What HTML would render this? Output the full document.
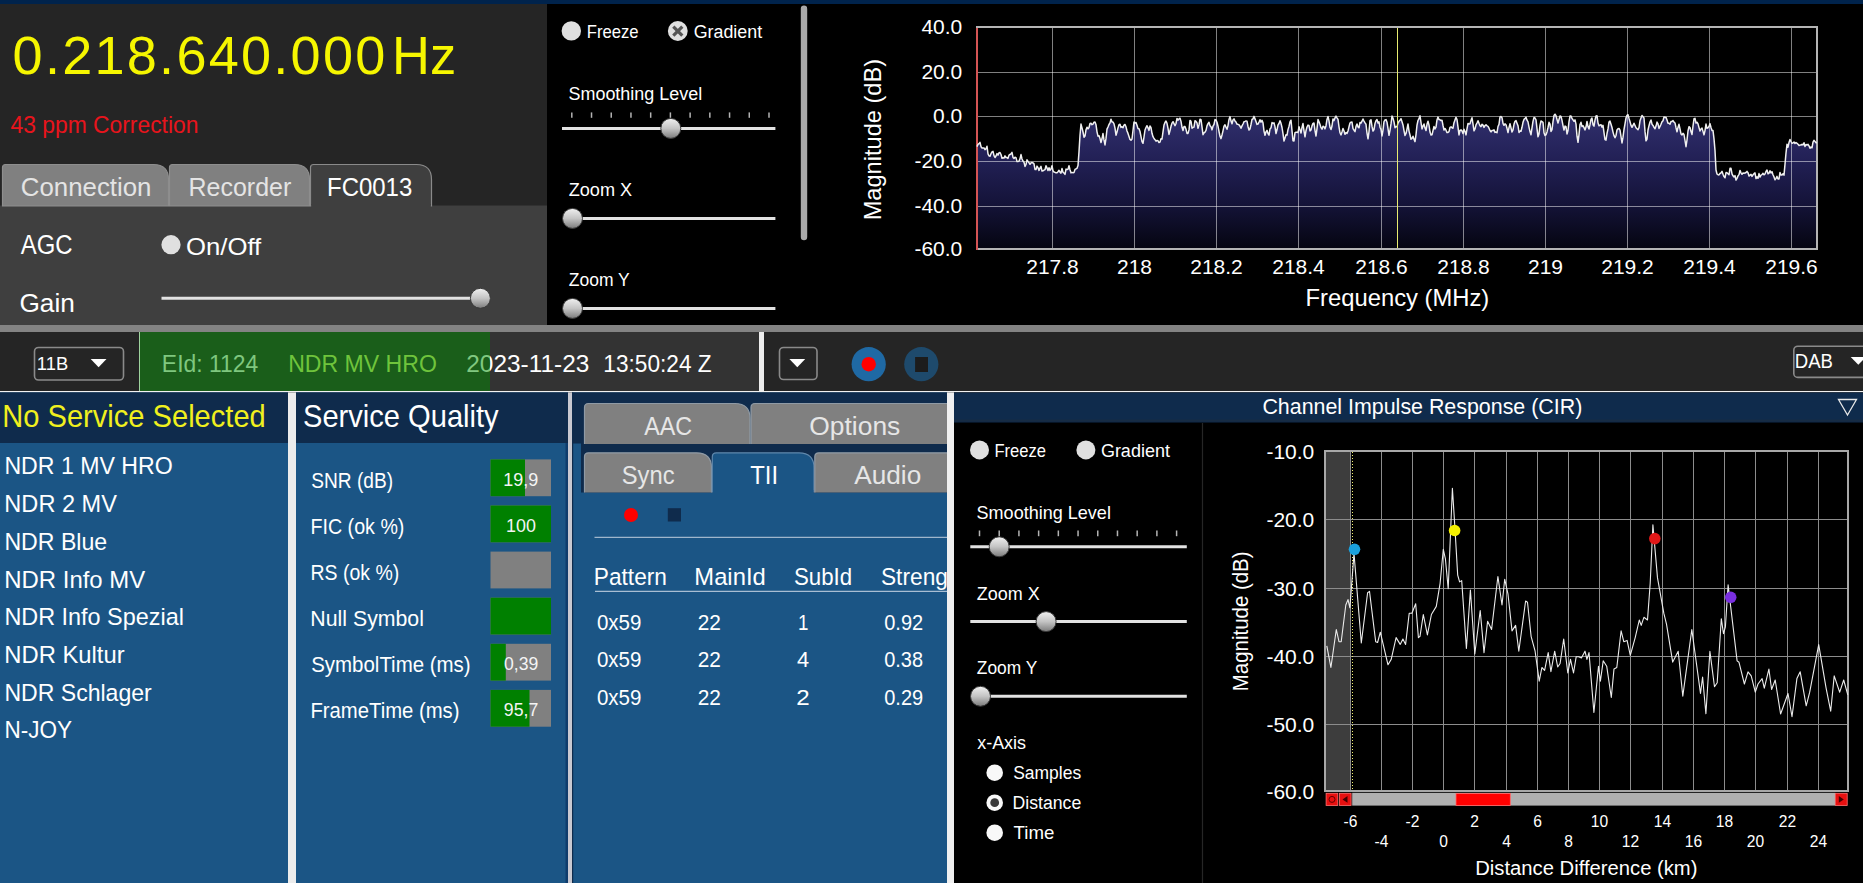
<!DOCTYPE html><html><head><meta charset="utf-8"><style>html,body{margin:0;padding:0;background:#000;overflow:hidden}svg{display:block}text{font-family:"Liberation Sans",sans-serif}</style></head><body><svg width="1863" height="883" viewBox="0 0 1863 883"><rect x="0" y="0" width="1863" height="883" fill="#000" /><rect x="0" y="0" width="1863" height="4" fill="#00234c" /><rect x="0" y="4" width="547" height="321" fill="#252525" /><rect x="0" y="205.5" width="547" height="119.5" fill="#3f3f3f" /><rect x="547" y="4" width="1316" height="321" fill="#000" /><rect x="0" y="325" width="1863" height="7" fill="#838383" /><rect x="0" y="332" width="1863" height="59" fill="#252525" /><rect x="139" y="332" width="351" height="59" fill="#1a5e1a" /><line x1="139.5" y1="332" x2="139.5" y2="391" stroke="#9fd39f" stroke-width="1" /><rect x="490" y="332" width="269" height="59" fill="#333333" /><rect x="759" y="332" width="5" height="59" fill="#ededed" /><rect x="0" y="391" width="1863" height="1.5" fill="#f2f2f2" /><rect x="0" y="392.5" width="288" height="491" fill="#1b5585" /><rect x="0" y="392.5" width="288" height="50.5" fill="#0f2b4c" /><rect x="288" y="392.5" width="8" height="491" fill="#ececec" /><rect x="296" y="392.5" width="272" height="491" fill="#1b5585" /><rect x="296" y="392.5" width="272" height="50.5" fill="#0f2b4c" /><rect x="565.5" y="443" width="2.5" height="441" fill="#0f3c6c" /><rect x="568" y="392.5" width="4" height="491" fill="#c9c9d1" /><rect x="572" y="392.5" width="375" height="491" fill="#1b5585" /><rect x="572" y="392.5" width="375" height="51" fill="#0f2b4c" /><rect x="581" y="443" width="366" height="49.5" fill="#0f2b4c" /><rect x="572" y="392.5" width="1.2" height="491" fill="#0f2b4c" /><rect x="947" y="392.5" width="7" height="491" fill="#f0f0f0" /><rect x="954" y="392.5" width="909" height="491" fill="#000" /><rect x="954" y="392.5" width="909" height="30" fill="#0f2b4c" /><defs>
<linearGradient id="thumb" x1="0" y1="0" x2="0" y2="1">
<stop offset="0" stop-color="#f0f0f0"/><stop offset="0.5" stop-color="#c4c4c4"/><stop offset="1" stop-color="#7c7c7c"/></linearGradient>
<linearGradient id="specfill" x1="0" y1="0" x2="0" y2="1">
<stop offset="0" stop-color="#403f78"/><stop offset="1" stop-color="#0b0b18"/></linearGradient>
</defs><text x="12.59" y="73.9" font-size="54.07" fill="#f6f600" textLength="372.72" lengthAdjust="spacing" >0.218.640.000</text><text x="392.00" y="73.9" font-size="54.07" fill="#f6f600" textLength="64.12" lengthAdjust="spacingAndGlyphs" >Hz</text><text x="10.48" y="133.4" font-size="23.26" fill="#e8141c" textLength="188.01" lengthAdjust="spacingAndGlyphs" >43 ppm Correction</text><path d="M2.5,206 L2.5,167.5 Q2.5,164.5 5.5,164.5 L153.5,164.5 Q168.5,164.5 168.5,179.5 L168.5,206 Z" fill="#808080" stroke="#8e8e8e" stroke-width="1.2"/><path d="M169.5,206 L169.5,167.5 Q169.5,164.5 172.5,164.5 L294.5,164.5 Q309.5,164.5 309.5,179.5 L309.5,206 Z" fill="#808080" stroke="#8e8e8e" stroke-width="1.2"/><path d="M310.5,206 L310.5,167.5 Q310.5,164.5 313.5,164.5 L416.5,164.5 Q431.5,164.5 431.5,179.5 L431.5,206 Z" fill="#3f3f3f" stroke="#8a8a8a" stroke-width="1.2"/><rect x="311.2" y="204" width="119.6" height="4" fill="#3f3f3f" /><text x="20.79" y="195.6" font-size="26.02" fill="#e4e4e4" textLength="130.69" lengthAdjust="spacingAndGlyphs" >Connection</text><text x="188.55" y="195.6" font-size="26.02" fill="#e4e4e4" textLength="102.66" lengthAdjust="spacingAndGlyphs" >Recorder</text><text x="327.04" y="195.6" font-size="26.02" fill="#ffffff" textLength="85.22" lengthAdjust="spacingAndGlyphs" >FC0013</text><text x="20.75" y="254.0" font-size="27.62" fill="#fff" textLength="51.76" lengthAdjust="spacingAndGlyphs" >AGC</text><circle cx="171" cy="244.7" r="9.6" fill="#e0e0e0" /><text x="185.99" y="255.3" font-size="23.69" fill="#fff" textLength="75.27" lengthAdjust="spacingAndGlyphs" >On/Off</text><text x="19.48" y="312.1" font-size="26.60" fill="#fff" textLength="55.42" lengthAdjust="spacingAndGlyphs" >Gain</text><line x1="161.5" y1="298.3" x2="480" y2="298.3" stroke="#e2e2e2" stroke-width="3" stroke-linecap="butt"/><circle cx="480.4" cy="298.3" r="10" fill="url(#thumb)" stroke="#3a3a3a" stroke-width="1"/><circle cx="571.3" cy="30.9" r="9.7" fill="#e0e0e0" /><text x="586.83" y="37.7" font-size="18.46" fill="#fff" textLength="51.81" lengthAdjust="spacingAndGlyphs" >Freeze</text><circle cx="677.8" cy="31" r="9.9" fill="#e0e0e0" /><line x1="673.3" y1="26.6" x2="682.3" y2="35.6" stroke="#555" stroke-width="3.2" /><line x1="682.3" y1="26.6" x2="673.3" y2="35.6" stroke="#555" stroke-width="3.2" /><text x="693.70" y="37.7" font-size="18.46" fill="#fff" textLength="68.43" lengthAdjust="spacingAndGlyphs" >Gradient</text><text x="568.48" y="99.9" font-size="18.75" fill="#fff" textLength="133.72" lengthAdjust="spacingAndGlyphs" >Smoothing Level</text><line x1="562" y1="128.4" x2="775.4" y2="128.4" stroke="#e2e2e2" stroke-width="3" stroke-linecap="butt"/><line x1="571.8" y1="112.4" x2="571.8" y2="117.8" stroke="#b4b4b4" stroke-width="1.5" /><line x1="591.52" y1="112.4" x2="591.52" y2="117.8" stroke="#b4b4b4" stroke-width="1.5" /><line x1="611.24" y1="112.4" x2="611.24" y2="117.8" stroke="#b4b4b4" stroke-width="1.5" /><line x1="630.9599999999999" y1="112.4" x2="630.9599999999999" y2="117.8" stroke="#b4b4b4" stroke-width="1.5" /><line x1="650.68" y1="112.4" x2="650.68" y2="117.8" stroke="#b4b4b4" stroke-width="1.5" /><line x1="670.4" y1="112.4" x2="670.4" y2="117.8" stroke="#b4b4b4" stroke-width="1.5" /><line x1="690.12" y1="112.4" x2="690.12" y2="117.8" stroke="#b4b4b4" stroke-width="1.5" /><line x1="709.8399999999999" y1="112.4" x2="709.8399999999999" y2="117.8" stroke="#b4b4b4" stroke-width="1.5" /><line x1="729.56" y1="112.4" x2="729.56" y2="117.8" stroke="#b4b4b4" stroke-width="1.5" /><line x1="749.28" y1="112.4" x2="749.28" y2="117.8" stroke="#b4b4b4" stroke-width="1.5" /><line x1="769.0" y1="112.4" x2="769.0" y2="117.8" stroke="#b4b4b4" stroke-width="1.5" /><circle cx="670.8" cy="128.4" r="10" fill="url(#thumb)" stroke="#3a3a3a" stroke-width="1"/><text x="568.72" y="195.6" font-size="17.44" fill="#fff" textLength="63.46" lengthAdjust="spacingAndGlyphs" >Zoom X</text><line x1="572.5" y1="218.4" x2="775.4" y2="218.4" stroke="#e2e2e2" stroke-width="3" stroke-linecap="butt"/><circle cx="572.5" cy="218.4" r="10" fill="url(#thumb)" stroke="#3a3a3a" stroke-width="1"/><text x="568.75" y="285.6" font-size="17.44" fill="#fff" textLength="60.93" lengthAdjust="spacingAndGlyphs" >Zoom Y</text><line x1="572.5" y1="308.4" x2="775.4" y2="308.4" stroke="#e2e2e2" stroke-width="3" stroke-linecap="butt"/><circle cx="572.5" cy="308.4" r="10" fill="url(#thumb)" stroke="#3a3a3a" stroke-width="1"/><rect x="800.8" y="5.6" width="6.4" height="234.6" rx="3.2" fill="#a9a9a9"/><linearGradient id="sg" gradientUnits="userSpaceOnUse" x1="0" y1="27" x2="0" y2="249.3"><stop offset="0" stop-color="#4c4aa8"/><stop offset="0.4" stop-color="#302f6c"/><stop offset="0.6" stop-color="#222055"/><stop offset="0.8" stop-color="#141338"/><stop offset="1" stop-color="#050510"/></linearGradient><polygon points="977,249.3 977.0,146.6 978.0,144.4 979.0,143.7 980.0,142.4 981.0,146.7 982.0,148.0 983.0,148.1 984.0,147.9 985.0,149.7 986.0,148.8 987.0,146.3 988.0,153.9 989.0,155.8 990.0,156.3 991.0,153.7 992.0,151.8 993.0,151.3 994.0,155.6 995.0,157.5 996.0,156.0 997.0,153.6 998.0,155.1 999.0,152.7 1000.0,152.6 1001.0,154.5 1002.0,158.2 1003.0,157.8 1004.0,158.1 1005.0,155.9 1006.0,157.5 1007.0,157.6 1008.0,158.4 1009.0,155.1 1010.0,154.5 1011.0,153.9 1012.0,152.3 1013.0,157.4 1014.0,158.5 1015.0,157.2 1016.0,157.6 1017.0,161.6 1018.0,161.5 1019.0,161.1 1020.0,158.9 1021.0,154.6 1022.0,159.0 1023.0,161.1 1024.0,162.1 1025.0,166.4 1026.0,164.5 1027.0,159.8 1028.0,161.4 1029.0,162.7 1030.0,164.3 1031.0,162.8 1032.0,162.5 1033.0,162.9 1034.0,163.9 1035.0,169.4 1036.0,169.6 1037.0,166.1 1038.0,167.7 1039.0,170.4 1040.0,168.1 1041.0,166.3 1042.0,171.1 1043.0,170.8 1044.0,170.2 1045.0,169.7 1046.0,165.8 1047.0,167.9 1048.0,170.5 1049.0,167.8 1050.0,170.4 1051.0,169.0 1052.0,165.7 1053.0,170.8 1054.0,172.0 1055.0,172.3 1056.0,172.8 1057.0,172.7 1058.0,171.7 1059.0,170.3 1060.0,172.2 1061.0,173.1 1062.0,168.5 1063.0,172.3 1064.0,173.0 1065.0,174.4 1066.0,169.1 1067.0,169.5 1068.0,169.2 1069.0,165.8 1070.0,169.7 1071.0,172.9 1072.0,172.4 1073.0,172.7 1074.0,172.5 1075.0,169.4 1076.0,168.8 1077.0,168.3 1078.0,165.6 1079.0,151.9 1080.0,135.3 1081.0,124.1 1082.0,127.9 1083.0,132.0 1084.0,137.2 1085.0,136.1 1086.0,129.8 1087.0,127.2 1088.0,128.9 1089.0,127.5 1090.0,123.5 1091.0,123.3 1092.0,124.7 1093.0,124.2 1094.0,122.2 1095.0,122.0 1096.0,124.7 1097.0,131.8 1098.0,136.2 1099.0,135.7 1100.0,138.6 1101.0,142.5 1102.0,138.8 1103.0,133.5 1104.0,139.9 1105.0,144.9 1106.0,138.4 1107.0,129.1 1108.0,127.0 1109.0,124.5 1110.0,122.9 1111.0,119.3 1112.0,122.0 1113.0,122.0 1114.0,123.9 1115.0,128.2 1116.0,135.2 1117.0,132.0 1118.0,127.9 1119.0,124.7 1120.0,124.3 1121.0,127.4 1122.0,126.7 1123.0,127.7 1124.0,125.1 1125.0,124.5 1126.0,126.8 1127.0,131.0 1128.0,133.4 1129.0,136.4 1130.0,139.4 1131.0,140.2 1132.0,139.1 1133.0,130.5 1134.0,122.1 1135.0,123.1 1136.0,122.5 1137.0,125.2 1138.0,128.6 1139.0,128.7 1140.0,131.5 1141.0,136.6 1142.0,141.7 1143.0,143.3 1144.0,137.0 1145.0,130.0 1146.0,127.5 1147.0,125.7 1148.0,127.9 1149.0,130.4 1150.0,125.9 1151.0,127.6 1152.0,133.3 1153.0,136.7 1154.0,138.5 1155.0,139.7 1156.0,141.2 1157.0,140.4 1158.0,140.8 1159.0,142.5 1160.0,142.1 1161.0,138.8 1162.0,139.0 1163.0,131.9 1164.0,125.1 1165.0,122.5 1166.0,121.0 1167.0,123.3 1168.0,128.4 1169.0,134.4 1170.0,130.6 1171.0,126.3 1172.0,123.1 1173.0,121.7 1174.0,123.7 1175.0,125.7 1176.0,123.5 1177.0,118.4 1178.0,120.2 1179.0,118.9 1180.0,118.2 1181.0,121.4 1182.0,127.3 1183.0,130.5 1184.0,126.6 1185.0,126.6 1186.0,129.3 1187.0,133.4 1188.0,133.4 1189.0,129.9 1190.0,120.4 1191.0,121.3 1192.0,128.2 1193.0,127.4 1194.0,127.1 1195.0,120.7 1196.0,121.3 1197.0,122.8 1198.0,128.3 1199.0,124.9 1200.0,119.2 1201.0,119.7 1202.0,126.9 1203.0,134.7 1204.0,132.9 1205.0,132.2 1206.0,130.4 1207.0,125.9 1208.0,123.6 1209.0,122.3 1210.0,125.8 1211.0,126.7 1212.0,129.9 1213.0,126.2 1214.0,124.5 1215.0,119.6 1216.0,120.0 1217.0,122.2 1218.0,126.2 1219.0,131.5 1220.0,136.3 1221.0,138.6 1222.0,135.0 1223.0,130.8 1224.0,126.2 1225.0,124.8 1226.0,127.1 1227.0,129.2 1228.0,125.6 1229.0,119.4 1230.0,116.6 1231.0,121.1 1232.0,123.8 1233.0,120.0 1234.0,118.9 1235.0,121.0 1236.0,122.1 1237.0,124.2 1238.0,124.3 1239.0,124.8 1240.0,126.2 1241.0,128.3 1242.0,125.9 1243.0,124.0 1244.0,121.8 1245.0,121.4 1246.0,120.9 1247.0,121.2 1248.0,126.5 1249.0,130.0 1250.0,128.9 1251.0,124.5 1252.0,119.5 1253.0,118.9 1254.0,116.4 1255.0,118.9 1256.0,121.5 1257.0,124.4 1258.0,124.1 1259.0,122.1 1260.0,119.8 1261.0,122.1 1262.0,120.4 1263.0,122.8 1264.0,131.1 1265.0,135.3 1266.0,131.8 1267.0,130.3 1268.0,133.5 1269.0,135.1 1270.0,129.0 1271.0,127.8 1272.0,122.6 1273.0,123.3 1274.0,122.9 1275.0,126.9 1276.0,133.6 1277.0,129.8 1278.0,125.0 1279.0,123.5 1280.0,120.8 1281.0,123.3 1282.0,127.5 1283.0,133.6 1284.0,141.1 1285.0,138.0 1286.0,134.7 1287.0,135.2 1288.0,129.6 1289.0,126.4 1290.0,121.9 1291.0,120.2 1292.0,130.8 1293.0,140.7 1294.0,140.9 1295.0,132.6 1296.0,132.2 1297.0,132.2 1298.0,132.7 1299.0,126.7 1300.0,129.9 1301.0,133.0 1302.0,127.5 1303.0,123.5 1304.0,130.8 1305.0,136.8 1306.0,130.7 1307.0,127.0 1308.0,125.1 1309.0,125.4 1310.0,130.9 1311.0,130.0 1312.0,125.9 1313.0,123.4 1314.0,123.0 1315.0,130.6 1316.0,136.0 1317.0,128.7 1318.0,119.6 1319.0,121.7 1320.0,124.4 1321.0,127.7 1322.0,129.2 1323.0,126.3 1324.0,126.7 1325.0,128.9 1326.0,125.7 1327.0,119.4 1328.0,116.4 1329.0,120.9 1330.0,127.3 1331.0,129.5 1332.0,126.0 1333.0,118.9 1334.0,120.6 1335.0,117.9 1336.0,116.1 1337.0,117.8 1338.0,119.4 1339.0,126.8 1340.0,132.8 1341.0,134.9 1342.0,131.9 1343.0,128.5 1344.0,131.0 1345.0,134.3 1346.0,132.5 1347.0,133.4 1348.0,131.0 1349.0,126.8 1350.0,123.0 1351.0,122.2 1352.0,122.1 1353.0,128.7 1354.0,130.2 1355.0,131.6 1356.0,126.6 1357.0,123.9 1358.0,127.0 1359.0,127.8 1360.0,122.4 1361.0,123.1 1362.0,121.2 1363.0,119.0 1364.0,121.1 1365.0,122.9 1366.0,124.3 1367.0,133.1 1368.0,138.8 1369.0,131.6 1370.0,120.6 1371.0,119.7 1372.0,126.4 1373.0,131.1 1374.0,129.5 1375.0,123.6 1376.0,120.8 1377.0,119.6 1378.0,123.1 1379.0,121.8 1380.0,127.2 1381.0,129.4 1382.0,135.9 1383.0,130.1 1384.0,121.6 1385.0,120.0 1386.0,119.6 1387.0,122.2 1388.0,128.6 1389.0,135.3 1390.0,130.3 1391.0,123.9 1392.0,116.0 1393.0,118.2 1394.0,121.9 1395.0,127.7 1396.0,126.6 1397.0,126.9 1398.0,123.0 1399.0,121.3 1400.0,120.2 1401.0,118.7 1402.0,121.8 1403.0,124.9 1404.0,130.6 1405.0,135.5 1406.0,133.5 1407.0,129.1 1408.0,124.0 1409.0,131.1 1410.0,135.0 1411.0,139.3 1412.0,138.4 1413.0,136.2 1414.0,139.2 1415.0,141.6 1416.0,134.6 1417.0,125.2 1418.0,120.5 1419.0,118.7 1420.0,115.8 1421.0,122.5 1422.0,129.0 1423.0,126.1 1424.0,124.0 1425.0,128.0 1426.0,130.6 1427.0,124.3 1428.0,121.3 1429.0,125.1 1430.0,132.1 1431.0,135.0 1432.0,134.8 1433.0,130.6 1434.0,126.4 1435.0,129.0 1436.0,127.2 1437.0,119.9 1438.0,117.1 1439.0,119.6 1440.0,119.7 1441.0,120.6 1442.0,120.2 1443.0,125.5 1444.0,130.0 1445.0,128.5 1446.0,130.2 1447.0,132.6 1448.0,132.4 1449.0,131.7 1450.0,127.3 1451.0,126.8 1452.0,127.8 1453.0,128.2 1454.0,122.7 1455.0,119.9 1456.0,117.4 1457.0,119.5 1458.0,127.1 1459.0,134.9 1460.0,130.5 1461.0,129.9 1462.0,130.9 1463.0,133.6 1464.0,129.2 1465.0,131.5 1466.0,134.9 1467.0,128.8 1468.0,123.5 1469.0,124.1 1470.0,123.7 1471.0,120.6 1472.0,117.7 1473.0,124.0 1474.0,130.8 1475.0,129.0 1476.0,124.9 1477.0,123.0 1478.0,120.7 1479.0,123.3 1480.0,125.7 1481.0,126.6 1482.0,124.2 1483.0,125.1 1484.0,127.4 1485.0,125.6 1486.0,124.7 1487.0,125.8 1488.0,126.3 1489.0,128.2 1490.0,130.5 1491.0,131.9 1492.0,130.4 1493.0,130.5 1494.0,129.9 1495.0,132.4 1496.0,132.0 1497.0,132.7 1498.0,126.5 1499.0,124.4 1500.0,116.9 1501.0,116.5 1502.0,117.7 1503.0,123.3 1504.0,125.3 1505.0,123.9 1506.0,124.8 1507.0,128.3 1508.0,132.5 1509.0,127.7 1510.0,123.8 1511.0,127.9 1512.0,132.0 1513.0,129.9 1514.0,124.3 1515.0,121.3 1516.0,120.6 1517.0,123.2 1518.0,125.7 1519.0,132.5 1520.0,131.1 1521.0,131.3 1522.0,127.3 1523.0,122.3 1524.0,119.4 1525.0,118.6 1526.0,117.2 1527.0,120.2 1528.0,121.9 1529.0,127.1 1530.0,131.6 1531.0,134.7 1532.0,127.8 1533.0,121.4 1534.0,117.4 1535.0,118.0 1536.0,119.8 1537.0,128.6 1538.0,136.8 1539.0,133.9 1540.0,125.3 1541.0,121.0 1542.0,121.6 1543.0,122.3 1544.0,132.7 1545.0,135.4 1546.0,134.8 1547.0,131.9 1548.0,127.5 1549.0,122.3 1550.0,124.2 1551.0,131.5 1552.0,129.6 1553.0,121.7 1554.0,115.4 1555.0,114.2 1556.0,115.7 1557.0,119.5 1558.0,123.0 1559.0,119.5 1560.0,116.0 1561.0,116.5 1562.0,120.4 1563.0,125.6 1564.0,130.0 1565.0,126.1 1566.0,126.7 1567.0,134.0 1568.0,130.5 1569.0,121.6 1570.0,116.1 1571.0,115.9 1572.0,118.6 1573.0,119.8 1574.0,121.3 1575.0,119.9 1576.0,124.1 1577.0,136.2 1578.0,142.3 1579.0,134.6 1580.0,124.5 1581.0,122.3 1582.0,126.6 1583.0,125.7 1584.0,127.6 1585.0,129.9 1586.0,127.1 1587.0,121.4 1588.0,126.6 1589.0,129.0 1590.0,124.7 1591.0,119.5 1592.0,118.0 1593.0,124.7 1594.0,126.1 1595.0,120.1 1596.0,115.9 1597.0,115.8 1598.0,123.0 1599.0,125.8 1600.0,125.2 1601.0,124.7 1602.0,127.1 1603.0,125.3 1604.0,132.7 1605.0,139.6 1606.0,140.1 1607.0,133.5 1608.0,128.9 1609.0,122.1 1610.0,121.1 1611.0,124.3 1612.0,127.5 1613.0,132.1 1614.0,135.6 1615.0,137.8 1616.0,135.5 1617.0,130.0 1618.0,128.7 1619.0,128.5 1620.0,130.1 1621.0,136.5 1622.0,142.9 1623.0,137.2 1624.0,129.5 1625.0,123.8 1626.0,118.0 1627.0,115.3 1628.0,114.7 1629.0,118.4 1630.0,121.7 1631.0,125.4 1632.0,127.3 1633.0,125.3 1634.0,123.2 1635.0,125.5 1636.0,127.7 1637.0,128.8 1638.0,129.7 1639.0,127.6 1640.0,120.8 1641.0,118.1 1642.0,115.5 1643.0,116.8 1644.0,118.0 1645.0,131.4 1646.0,140.8 1647.0,139.1 1648.0,130.0 1649.0,125.7 1650.0,122.0 1651.0,120.0 1652.0,124.2 1653.0,125.4 1654.0,127.3 1655.0,128.7 1656.0,126.1 1657.0,122.1 1658.0,123.8 1659.0,128.4 1660.0,126.4 1661.0,124.2 1662.0,121.8 1663.0,120.7 1664.0,116.9 1665.0,117.4 1666.0,117.3 1667.0,120.0 1668.0,123.2 1669.0,123.3 1670.0,124.2 1671.0,121.6 1672.0,121.5 1673.0,120.6 1674.0,122.2 1675.0,123.0 1676.0,127.7 1677.0,131.8 1678.0,127.4 1679.0,124.3 1680.0,129.0 1681.0,133.9 1682.0,134.9 1683.0,133.3 1684.0,134.5 1685.0,140.5 1686.0,146.7 1687.0,140.0 1688.0,131.0 1689.0,126.7 1690.0,127.5 1691.0,131.5 1692.0,134.5 1693.0,126.0 1694.0,118.8 1695.0,118.4 1696.0,123.1 1697.0,122.2 1698.0,123.9 1699.0,127.6 1700.0,131.0 1701.0,129.0 1702.0,128.1 1703.0,131.4 1704.0,134.9 1705.0,130.6 1706.0,124.1 1707.0,128.3 1708.0,127.9 1709.0,126.4 1710.0,123.6 1711.0,127.5 1712.0,130.6 1713.0,130.5 1714.0,138.9 1715.0,150.5 1716.0,170.0 1717.0,174.0 1718.0,174.7 1719.0,174.9 1720.0,173.5 1721.0,172.9 1722.0,171.3 1723.0,174.2 1724.0,176.6 1725.0,177.8 1726.0,172.6 1727.0,172.8 1728.0,173.7 1729.0,174.8 1730.0,168.3 1731.0,168.3 1732.0,173.8 1733.0,175.8 1734.0,176.9 1735.0,175.6 1736.0,180.1 1737.0,178.4 1738.0,175.9 1739.0,174.6 1740.0,170.4 1741.0,172.8 1742.0,174.3 1743.0,173.0 1744.0,173.2 1745.0,173.1 1746.0,172.5 1747.0,171.4 1748.0,172.7 1749.0,176.1 1750.0,175.2 1751.0,174.4 1752.0,176.4 1753.0,174.8 1754.0,173.7 1755.0,172.9 1756.0,178.6 1757.0,176.8 1758.0,178.3 1759.0,173.6 1760.0,177.1 1761.0,175.1 1762.0,174.6 1763.0,173.3 1764.0,174.8 1765.0,174.0 1766.0,171.4 1767.0,170.0 1768.0,173.7 1769.0,173.3 1770.0,170.8 1771.0,172.9 1772.0,171.7 1773.0,174.8 1774.0,176.9 1775.0,179.8 1776.0,178.3 1777.0,176.4 1778.0,179.0 1779.0,178.9 1780.0,172.4 1781.0,175.0 1782.0,174.9 1783.0,173.7 1784.0,175.1 1785.0,164.2 1786.0,153.0 1787.0,144.3 1788.0,147.2 1789.0,142.6 1790.0,139.5 1791.0,141.5 1792.0,143.3 1793.0,142.8 1794.0,142.0 1795.0,143.5 1796.0,142.5 1797.0,143.3 1798.0,144.3 1799.0,145.5 1800.0,145.1 1801.0,145.1 1802.0,144.3 1803.0,144.9 1804.0,142.8 1805.0,146.5 1806.0,144.5 1807.0,145.1 1808.0,144.3 1809.0,145.9 1810.0,148.3 1811.0,147.1 1812.0,147.8 1813.0,142.2 1814.0,140.3 1815.0,141.6 1816.0,142.7 1817.0,142.8 1817,249.3" fill="url(#sg)"/><line x1="977" y1="72.5" x2="1817" y2="72.5" stroke="#ffffff" stroke-width="1" stroke-opacity="0.5"/><line x1="977" y1="116.5" x2="1817" y2="116.5" stroke="#ffffff" stroke-width="1" stroke-opacity="0.5"/><line x1="977" y1="161.5" x2="1817" y2="161.5" stroke="#ffffff" stroke-width="1" stroke-opacity="0.5"/><line x1="977" y1="206.5" x2="1817" y2="206.5" stroke="#ffffff" stroke-width="1" stroke-opacity="0.5"/><line x1="1052.5" y1="27" x2="1052.5" y2="249.3" stroke="#ffffff" stroke-width="1" stroke-opacity="0.5"/><line x1="1134.5" y1="27" x2="1134.5" y2="249.3" stroke="#ffffff" stroke-width="1" stroke-opacity="0.5"/><line x1="1216.5" y1="27" x2="1216.5" y2="249.3" stroke="#ffffff" stroke-width="1" stroke-opacity="0.5"/><line x1="1298.5" y1="27" x2="1298.5" y2="249.3" stroke="#ffffff" stroke-width="1" stroke-opacity="0.5"/><line x1="1381.5" y1="27" x2="1381.5" y2="249.3" stroke="#ffffff" stroke-width="1" stroke-opacity="0.5"/><line x1="1463.5" y1="27" x2="1463.5" y2="249.3" stroke="#ffffff" stroke-width="1" stroke-opacity="0.5"/><line x1="1545.5" y1="27" x2="1545.5" y2="249.3" stroke="#ffffff" stroke-width="1" stroke-opacity="0.5"/><line x1="1627.5" y1="27" x2="1627.5" y2="249.3" stroke="#ffffff" stroke-width="1" stroke-opacity="0.5"/><line x1="1709.5" y1="27" x2="1709.5" y2="249.3" stroke="#ffffff" stroke-width="1" stroke-opacity="0.5"/><line x1="1791.5" y1="27" x2="1791.5" y2="249.3" stroke="#ffffff" stroke-width="1" stroke-opacity="0.5"/><rect x="977" y="27" width="840" height="222" fill="none" stroke="#b4b4b4" stroke-width="2"/><line x1="977" y1="28" x2="977" y2="250" stroke="#d45454" stroke-width="2" /><polyline points="977.0,146.6 978.0,144.4 979.0,143.7 980.0,142.4 981.0,146.7 982.0,148.0 983.0,148.1 984.0,147.9 985.0,149.7 986.0,148.8 987.0,146.3 988.0,153.9 989.0,155.8 990.0,156.3 991.0,153.7 992.0,151.8 993.0,151.3 994.0,155.6 995.0,157.5 996.0,156.0 997.0,153.6 998.0,155.1 999.0,152.7 1000.0,152.6 1001.0,154.5 1002.0,158.2 1003.0,157.8 1004.0,158.1 1005.0,155.9 1006.0,157.5 1007.0,157.6 1008.0,158.4 1009.0,155.1 1010.0,154.5 1011.0,153.9 1012.0,152.3 1013.0,157.4 1014.0,158.5 1015.0,157.2 1016.0,157.6 1017.0,161.6 1018.0,161.5 1019.0,161.1 1020.0,158.9 1021.0,154.6 1022.0,159.0 1023.0,161.1 1024.0,162.1 1025.0,166.4 1026.0,164.5 1027.0,159.8 1028.0,161.4 1029.0,162.7 1030.0,164.3 1031.0,162.8 1032.0,162.5 1033.0,162.9 1034.0,163.9 1035.0,169.4 1036.0,169.6 1037.0,166.1 1038.0,167.7 1039.0,170.4 1040.0,168.1 1041.0,166.3 1042.0,171.1 1043.0,170.8 1044.0,170.2 1045.0,169.7 1046.0,165.8 1047.0,167.9 1048.0,170.5 1049.0,167.8 1050.0,170.4 1051.0,169.0 1052.0,165.7 1053.0,170.8 1054.0,172.0 1055.0,172.3 1056.0,172.8 1057.0,172.7 1058.0,171.7 1059.0,170.3 1060.0,172.2 1061.0,173.1 1062.0,168.5 1063.0,172.3 1064.0,173.0 1065.0,174.4 1066.0,169.1 1067.0,169.5 1068.0,169.2 1069.0,165.8 1070.0,169.7 1071.0,172.9 1072.0,172.4 1073.0,172.7 1074.0,172.5 1075.0,169.4 1076.0,168.8 1077.0,168.3 1078.0,165.6 1079.0,151.9 1080.0,135.3 1081.0,124.1 1082.0,127.9 1083.0,132.0 1084.0,137.2 1085.0,136.1 1086.0,129.8 1087.0,127.2 1088.0,128.9 1089.0,127.5 1090.0,123.5 1091.0,123.3 1092.0,124.7 1093.0,124.2 1094.0,122.2 1095.0,122.0 1096.0,124.7 1097.0,131.8 1098.0,136.2 1099.0,135.7 1100.0,138.6 1101.0,142.5 1102.0,138.8 1103.0,133.5 1104.0,139.9 1105.0,144.9 1106.0,138.4 1107.0,129.1 1108.0,127.0 1109.0,124.5 1110.0,122.9 1111.0,119.3 1112.0,122.0 1113.0,122.0 1114.0,123.9 1115.0,128.2 1116.0,135.2 1117.0,132.0 1118.0,127.9 1119.0,124.7 1120.0,124.3 1121.0,127.4 1122.0,126.7 1123.0,127.7 1124.0,125.1 1125.0,124.5 1126.0,126.8 1127.0,131.0 1128.0,133.4 1129.0,136.4 1130.0,139.4 1131.0,140.2 1132.0,139.1 1133.0,130.5 1134.0,122.1 1135.0,123.1 1136.0,122.5 1137.0,125.2 1138.0,128.6 1139.0,128.7 1140.0,131.5 1141.0,136.6 1142.0,141.7 1143.0,143.3 1144.0,137.0 1145.0,130.0 1146.0,127.5 1147.0,125.7 1148.0,127.9 1149.0,130.4 1150.0,125.9 1151.0,127.6 1152.0,133.3 1153.0,136.7 1154.0,138.5 1155.0,139.7 1156.0,141.2 1157.0,140.4 1158.0,140.8 1159.0,142.5 1160.0,142.1 1161.0,138.8 1162.0,139.0 1163.0,131.9 1164.0,125.1 1165.0,122.5 1166.0,121.0 1167.0,123.3 1168.0,128.4 1169.0,134.4 1170.0,130.6 1171.0,126.3 1172.0,123.1 1173.0,121.7 1174.0,123.7 1175.0,125.7 1176.0,123.5 1177.0,118.4 1178.0,120.2 1179.0,118.9 1180.0,118.2 1181.0,121.4 1182.0,127.3 1183.0,130.5 1184.0,126.6 1185.0,126.6 1186.0,129.3 1187.0,133.4 1188.0,133.4 1189.0,129.9 1190.0,120.4 1191.0,121.3 1192.0,128.2 1193.0,127.4 1194.0,127.1 1195.0,120.7 1196.0,121.3 1197.0,122.8 1198.0,128.3 1199.0,124.9 1200.0,119.2 1201.0,119.7 1202.0,126.9 1203.0,134.7 1204.0,132.9 1205.0,132.2 1206.0,130.4 1207.0,125.9 1208.0,123.6 1209.0,122.3 1210.0,125.8 1211.0,126.7 1212.0,129.9 1213.0,126.2 1214.0,124.5 1215.0,119.6 1216.0,120.0 1217.0,122.2 1218.0,126.2 1219.0,131.5 1220.0,136.3 1221.0,138.6 1222.0,135.0 1223.0,130.8 1224.0,126.2 1225.0,124.8 1226.0,127.1 1227.0,129.2 1228.0,125.6 1229.0,119.4 1230.0,116.6 1231.0,121.1 1232.0,123.8 1233.0,120.0 1234.0,118.9 1235.0,121.0 1236.0,122.1 1237.0,124.2 1238.0,124.3 1239.0,124.8 1240.0,126.2 1241.0,128.3 1242.0,125.9 1243.0,124.0 1244.0,121.8 1245.0,121.4 1246.0,120.9 1247.0,121.2 1248.0,126.5 1249.0,130.0 1250.0,128.9 1251.0,124.5 1252.0,119.5 1253.0,118.9 1254.0,116.4 1255.0,118.9 1256.0,121.5 1257.0,124.4 1258.0,124.1 1259.0,122.1 1260.0,119.8 1261.0,122.1 1262.0,120.4 1263.0,122.8 1264.0,131.1 1265.0,135.3 1266.0,131.8 1267.0,130.3 1268.0,133.5 1269.0,135.1 1270.0,129.0 1271.0,127.8 1272.0,122.6 1273.0,123.3 1274.0,122.9 1275.0,126.9 1276.0,133.6 1277.0,129.8 1278.0,125.0 1279.0,123.5 1280.0,120.8 1281.0,123.3 1282.0,127.5 1283.0,133.6 1284.0,141.1 1285.0,138.0 1286.0,134.7 1287.0,135.2 1288.0,129.6 1289.0,126.4 1290.0,121.9 1291.0,120.2 1292.0,130.8 1293.0,140.7 1294.0,140.9 1295.0,132.6 1296.0,132.2 1297.0,132.2 1298.0,132.7 1299.0,126.7 1300.0,129.9 1301.0,133.0 1302.0,127.5 1303.0,123.5 1304.0,130.8 1305.0,136.8 1306.0,130.7 1307.0,127.0 1308.0,125.1 1309.0,125.4 1310.0,130.9 1311.0,130.0 1312.0,125.9 1313.0,123.4 1314.0,123.0 1315.0,130.6 1316.0,136.0 1317.0,128.7 1318.0,119.6 1319.0,121.7 1320.0,124.4 1321.0,127.7 1322.0,129.2 1323.0,126.3 1324.0,126.7 1325.0,128.9 1326.0,125.7 1327.0,119.4 1328.0,116.4 1329.0,120.9 1330.0,127.3 1331.0,129.5 1332.0,126.0 1333.0,118.9 1334.0,120.6 1335.0,117.9 1336.0,116.1 1337.0,117.8 1338.0,119.4 1339.0,126.8 1340.0,132.8 1341.0,134.9 1342.0,131.9 1343.0,128.5 1344.0,131.0 1345.0,134.3 1346.0,132.5 1347.0,133.4 1348.0,131.0 1349.0,126.8 1350.0,123.0 1351.0,122.2 1352.0,122.1 1353.0,128.7 1354.0,130.2 1355.0,131.6 1356.0,126.6 1357.0,123.9 1358.0,127.0 1359.0,127.8 1360.0,122.4 1361.0,123.1 1362.0,121.2 1363.0,119.0 1364.0,121.1 1365.0,122.9 1366.0,124.3 1367.0,133.1 1368.0,138.8 1369.0,131.6 1370.0,120.6 1371.0,119.7 1372.0,126.4 1373.0,131.1 1374.0,129.5 1375.0,123.6 1376.0,120.8 1377.0,119.6 1378.0,123.1 1379.0,121.8 1380.0,127.2 1381.0,129.4 1382.0,135.9 1383.0,130.1 1384.0,121.6 1385.0,120.0 1386.0,119.6 1387.0,122.2 1388.0,128.6 1389.0,135.3 1390.0,130.3 1391.0,123.9 1392.0,116.0 1393.0,118.2 1394.0,121.9 1395.0,127.7 1396.0,126.6 1397.0,126.9 1398.0,123.0 1399.0,121.3 1400.0,120.2 1401.0,118.7 1402.0,121.8 1403.0,124.9 1404.0,130.6 1405.0,135.5 1406.0,133.5 1407.0,129.1 1408.0,124.0 1409.0,131.1 1410.0,135.0 1411.0,139.3 1412.0,138.4 1413.0,136.2 1414.0,139.2 1415.0,141.6 1416.0,134.6 1417.0,125.2 1418.0,120.5 1419.0,118.7 1420.0,115.8 1421.0,122.5 1422.0,129.0 1423.0,126.1 1424.0,124.0 1425.0,128.0 1426.0,130.6 1427.0,124.3 1428.0,121.3 1429.0,125.1 1430.0,132.1 1431.0,135.0 1432.0,134.8 1433.0,130.6 1434.0,126.4 1435.0,129.0 1436.0,127.2 1437.0,119.9 1438.0,117.1 1439.0,119.6 1440.0,119.7 1441.0,120.6 1442.0,120.2 1443.0,125.5 1444.0,130.0 1445.0,128.5 1446.0,130.2 1447.0,132.6 1448.0,132.4 1449.0,131.7 1450.0,127.3 1451.0,126.8 1452.0,127.8 1453.0,128.2 1454.0,122.7 1455.0,119.9 1456.0,117.4 1457.0,119.5 1458.0,127.1 1459.0,134.9 1460.0,130.5 1461.0,129.9 1462.0,130.9 1463.0,133.6 1464.0,129.2 1465.0,131.5 1466.0,134.9 1467.0,128.8 1468.0,123.5 1469.0,124.1 1470.0,123.7 1471.0,120.6 1472.0,117.7 1473.0,124.0 1474.0,130.8 1475.0,129.0 1476.0,124.9 1477.0,123.0 1478.0,120.7 1479.0,123.3 1480.0,125.7 1481.0,126.6 1482.0,124.2 1483.0,125.1 1484.0,127.4 1485.0,125.6 1486.0,124.7 1487.0,125.8 1488.0,126.3 1489.0,128.2 1490.0,130.5 1491.0,131.9 1492.0,130.4 1493.0,130.5 1494.0,129.9 1495.0,132.4 1496.0,132.0 1497.0,132.7 1498.0,126.5 1499.0,124.4 1500.0,116.9 1501.0,116.5 1502.0,117.7 1503.0,123.3 1504.0,125.3 1505.0,123.9 1506.0,124.8 1507.0,128.3 1508.0,132.5 1509.0,127.7 1510.0,123.8 1511.0,127.9 1512.0,132.0 1513.0,129.9 1514.0,124.3 1515.0,121.3 1516.0,120.6 1517.0,123.2 1518.0,125.7 1519.0,132.5 1520.0,131.1 1521.0,131.3 1522.0,127.3 1523.0,122.3 1524.0,119.4 1525.0,118.6 1526.0,117.2 1527.0,120.2 1528.0,121.9 1529.0,127.1 1530.0,131.6 1531.0,134.7 1532.0,127.8 1533.0,121.4 1534.0,117.4 1535.0,118.0 1536.0,119.8 1537.0,128.6 1538.0,136.8 1539.0,133.9 1540.0,125.3 1541.0,121.0 1542.0,121.6 1543.0,122.3 1544.0,132.7 1545.0,135.4 1546.0,134.8 1547.0,131.9 1548.0,127.5 1549.0,122.3 1550.0,124.2 1551.0,131.5 1552.0,129.6 1553.0,121.7 1554.0,115.4 1555.0,114.2 1556.0,115.7 1557.0,119.5 1558.0,123.0 1559.0,119.5 1560.0,116.0 1561.0,116.5 1562.0,120.4 1563.0,125.6 1564.0,130.0 1565.0,126.1 1566.0,126.7 1567.0,134.0 1568.0,130.5 1569.0,121.6 1570.0,116.1 1571.0,115.9 1572.0,118.6 1573.0,119.8 1574.0,121.3 1575.0,119.9 1576.0,124.1 1577.0,136.2 1578.0,142.3 1579.0,134.6 1580.0,124.5 1581.0,122.3 1582.0,126.6 1583.0,125.7 1584.0,127.6 1585.0,129.9 1586.0,127.1 1587.0,121.4 1588.0,126.6 1589.0,129.0 1590.0,124.7 1591.0,119.5 1592.0,118.0 1593.0,124.7 1594.0,126.1 1595.0,120.1 1596.0,115.9 1597.0,115.8 1598.0,123.0 1599.0,125.8 1600.0,125.2 1601.0,124.7 1602.0,127.1 1603.0,125.3 1604.0,132.7 1605.0,139.6 1606.0,140.1 1607.0,133.5 1608.0,128.9 1609.0,122.1 1610.0,121.1 1611.0,124.3 1612.0,127.5 1613.0,132.1 1614.0,135.6 1615.0,137.8 1616.0,135.5 1617.0,130.0 1618.0,128.7 1619.0,128.5 1620.0,130.1 1621.0,136.5 1622.0,142.9 1623.0,137.2 1624.0,129.5 1625.0,123.8 1626.0,118.0 1627.0,115.3 1628.0,114.7 1629.0,118.4 1630.0,121.7 1631.0,125.4 1632.0,127.3 1633.0,125.3 1634.0,123.2 1635.0,125.5 1636.0,127.7 1637.0,128.8 1638.0,129.7 1639.0,127.6 1640.0,120.8 1641.0,118.1 1642.0,115.5 1643.0,116.8 1644.0,118.0 1645.0,131.4 1646.0,140.8 1647.0,139.1 1648.0,130.0 1649.0,125.7 1650.0,122.0 1651.0,120.0 1652.0,124.2 1653.0,125.4 1654.0,127.3 1655.0,128.7 1656.0,126.1 1657.0,122.1 1658.0,123.8 1659.0,128.4 1660.0,126.4 1661.0,124.2 1662.0,121.8 1663.0,120.7 1664.0,116.9 1665.0,117.4 1666.0,117.3 1667.0,120.0 1668.0,123.2 1669.0,123.3 1670.0,124.2 1671.0,121.6 1672.0,121.5 1673.0,120.6 1674.0,122.2 1675.0,123.0 1676.0,127.7 1677.0,131.8 1678.0,127.4 1679.0,124.3 1680.0,129.0 1681.0,133.9 1682.0,134.9 1683.0,133.3 1684.0,134.5 1685.0,140.5 1686.0,146.7 1687.0,140.0 1688.0,131.0 1689.0,126.7 1690.0,127.5 1691.0,131.5 1692.0,134.5 1693.0,126.0 1694.0,118.8 1695.0,118.4 1696.0,123.1 1697.0,122.2 1698.0,123.9 1699.0,127.6 1700.0,131.0 1701.0,129.0 1702.0,128.1 1703.0,131.4 1704.0,134.9 1705.0,130.6 1706.0,124.1 1707.0,128.3 1708.0,127.9 1709.0,126.4 1710.0,123.6 1711.0,127.5 1712.0,130.6 1713.0,130.5 1714.0,138.9 1715.0,150.5 1716.0,170.0 1717.0,174.0 1718.0,174.7 1719.0,174.9 1720.0,173.5 1721.0,172.9 1722.0,171.3 1723.0,174.2 1724.0,176.6 1725.0,177.8 1726.0,172.6 1727.0,172.8 1728.0,173.7 1729.0,174.8 1730.0,168.3 1731.0,168.3 1732.0,173.8 1733.0,175.8 1734.0,176.9 1735.0,175.6 1736.0,180.1 1737.0,178.4 1738.0,175.9 1739.0,174.6 1740.0,170.4 1741.0,172.8 1742.0,174.3 1743.0,173.0 1744.0,173.2 1745.0,173.1 1746.0,172.5 1747.0,171.4 1748.0,172.7 1749.0,176.1 1750.0,175.2 1751.0,174.4 1752.0,176.4 1753.0,174.8 1754.0,173.7 1755.0,172.9 1756.0,178.6 1757.0,176.8 1758.0,178.3 1759.0,173.6 1760.0,177.1 1761.0,175.1 1762.0,174.6 1763.0,173.3 1764.0,174.8 1765.0,174.0 1766.0,171.4 1767.0,170.0 1768.0,173.7 1769.0,173.3 1770.0,170.8 1771.0,172.9 1772.0,171.7 1773.0,174.8 1774.0,176.9 1775.0,179.8 1776.0,178.3 1777.0,176.4 1778.0,179.0 1779.0,178.9 1780.0,172.4 1781.0,175.0 1782.0,174.9 1783.0,173.7 1784.0,175.1 1785.0,164.2 1786.0,153.0 1787.0,144.3 1788.0,147.2 1789.0,142.6 1790.0,139.5 1791.0,141.5 1792.0,143.3 1793.0,142.8 1794.0,142.0 1795.0,143.5 1796.0,142.5 1797.0,143.3 1798.0,144.3 1799.0,145.5 1800.0,145.1 1801.0,145.1 1802.0,144.3 1803.0,144.9 1804.0,142.8 1805.0,146.5 1806.0,144.5 1807.0,145.1 1808.0,144.3 1809.0,145.9 1810.0,148.3 1811.0,147.1 1812.0,147.8 1813.0,142.2 1814.0,140.3 1815.0,141.6 1816.0,142.7 1817.0,142.8" fill="none" stroke="#f0f0f0" stroke-width="1.5" stroke-linejoin="round"/><line x1="1397.5" y1="28" x2="1397.5" y2="248" stroke="#e8ec70" stroke-width="1" /><text x="962.3" y="33.7" font-size="21" fill="#fff" text-anchor="end">40.0</text><text x="962.3" y="79.2" font-size="21" fill="#fff" text-anchor="end">20.0</text><text x="962.3" y="123.2" font-size="21" fill="#fff" text-anchor="end">0.0</text><text x="962.3" y="168.2" font-size="21" fill="#fff" text-anchor="end">-20.0</text><text x="962.3" y="213.2" font-size="21" fill="#fff" text-anchor="end">-40.0</text><text x="962.3" y="255.7" font-size="21" fill="#fff" text-anchor="end">-60.0</text><text x="1052.5" y="273.9" font-size="21" fill="#fff" text-anchor="middle">217.8</text><text x="1134.5" y="273.9" font-size="21" fill="#fff" text-anchor="middle">218</text><text x="1216.5" y="273.9" font-size="21" fill="#fff" text-anchor="middle">218.2</text><text x="1298.5" y="273.9" font-size="21" fill="#fff" text-anchor="middle">218.4</text><text x="1381.5" y="273.9" font-size="21" fill="#fff" text-anchor="middle">218.6</text><text x="1463.5" y="273.9" font-size="21" fill="#fff" text-anchor="middle">218.8</text><text x="1545.5" y="273.9" font-size="21" fill="#fff" text-anchor="middle">219</text><text x="1627.5" y="273.9" font-size="21" fill="#fff" text-anchor="middle">219.2</text><text x="1709.5" y="273.9" font-size="21" fill="#fff" text-anchor="middle">219.4</text><text x="1791.5" y="273.9" font-size="21" fill="#fff" text-anchor="middle">219.6</text><text x="1305.55" y="305.7" font-size="23.26" fill="#fff" textLength="183.73" lengthAdjust="spacingAndGlyphs" >Frequency (MHz)</text><g transform="translate(880.6,218.4) rotate(-90)"><text x="-1.94" y="0.0" font-size="24.71" fill="#fff" textLength="161.40" lengthAdjust="spacingAndGlyphs" >Magnitude (dB)</text></g><rect x="34.5" y="347.5" width="89" height="32.5" rx="4" fill="#252525" stroke="#8a8a8a" stroke-width="1.6"/><text x="36.86" y="369.6" font-size="19.19" fill="#fff" textLength="31.27" lengthAdjust="spacingAndGlyphs" >11B</text><path d="M90.7,359 L106.5,359 L98.6,367.2 Z" fill="#fff"/><text x="161.85" y="371.9" font-size="24.42" fill="#7fc77f" textLength="96.41" lengthAdjust="spacingAndGlyphs" >EId: 1124</text><text x="288.21" y="371.9" font-size="24.42" fill="#6fc43c" textLength="148.70" lengthAdjust="spacingAndGlyphs" >NDR MV HRO</text><clipPath id="cg"><rect x="0" y="332" width="490" height="59"/></clipPath><clipPath id="cw"><rect x="490" y="332" width="400" height="59"/></clipPath><g clip-path="url(#cg)"><text x="466.29" y="371.5" font-size="24.42" fill="#80c880" textLength="123.07" lengthAdjust="spacingAndGlyphs" >2023-11-23</text></g><g clip-path="url(#cw)"><text x="466.29" y="371.5" font-size="24.42" fill="#fff" textLength="123.07" lengthAdjust="spacingAndGlyphs" >2023-11-23</text><text x="603.27" y="371.5" font-size="24.42" fill="#fff" textLength="108.44" lengthAdjust="spacingAndGlyphs" >13:50:24 Z</text></g><rect x="779.5" y="347.5" width="37.5" height="32" rx="4" fill="#252525" stroke="#8a8a8a" stroke-width="1.6"/><path d="M789.4,359 L805.2,359 L797.3,367.2 Z" fill="#fff"/><circle cx="868.7" cy="364.2" r="17.1" fill="#1f69a4" /><circle cx="868.7" cy="364.2" r="7.2" fill="#ff0000" /><circle cx="921.3" cy="364.2" r="17.1" fill="#1e4a6c" /><rect x="915.1" y="357" width="12.9" height="15" fill="#1c1c1c" /><rect x="1793.8" y="346.2" width="80" height="31.2" rx="4" fill="#252525" stroke="#8a8a8a" stroke-width="1.6"/><text x="1794.78" y="368.0" font-size="19.77" fill="#fff" textLength="38.20" lengthAdjust="spacingAndGlyphs" >DAB</text><path d="M1850.7,357 L1866,357 L1858.3,364.8 Z" fill="#fff"/><text x="2.31" y="426.8" font-size="30.96" fill="#f0f01e" textLength="263.46" lengthAdjust="spacingAndGlyphs" >No Service Selected</text><text x="4.40" y="473.9" font-size="23.69" fill="#fff" textLength="168.30" lengthAdjust="spacingAndGlyphs" >NDR 1 MV HRO</text><text x="4.37" y="511.8" font-size="23.69" fill="#fff" textLength="112.54" lengthAdjust="spacingAndGlyphs" >NDR 2 MV</text><text x="4.40" y="549.8" font-size="23.69" fill="#fff" textLength="102.82" lengthAdjust="spacingAndGlyphs" >NDR Blue</text><text x="4.34" y="588.0" font-size="23.69" fill="#fff" textLength="140.87" lengthAdjust="spacingAndGlyphs" >NDR Info MV</text><text x="4.38" y="625.1" font-size="23.69" fill="#fff" textLength="179.49" lengthAdjust="spacingAndGlyphs" >NDR Info Spezial</text><text x="4.35" y="663.0" font-size="23.69" fill="#fff" textLength="120.25" lengthAdjust="spacingAndGlyphs" >NDR Kultur</text><text x="4.41" y="700.8" font-size="23.69" fill="#fff" textLength="147.37" lengthAdjust="spacingAndGlyphs" >NDR Schlager</text><text x="4.45" y="738.4" font-size="23.69" fill="#fff" textLength="67.54" lengthAdjust="spacingAndGlyphs" >N-JOY</text><text x="302.98" y="426.8" font-size="30.96" fill="#fff" textLength="195.68" lengthAdjust="spacingAndGlyphs" >Service Quality</text><text x="311.23" y="487.6" font-size="22.24" fill="#fff" textLength="81.86" lengthAdjust="spacingAndGlyphs" >SNR (dB)</text><rect x="490.5" y="459.4" width="60.5" height="36.8" fill="#808080" /><rect x="490.5" y="459.4" width="34.5" height="36.8" fill="#008000" /><text x="503.33" y="485.9" font-size="17.88" fill="#f4f4f4" textLength="34.92" lengthAdjust="spacingAndGlyphs" >19,9</text><text x="310.49" y="533.6" font-size="22.24" fill="#fff" textLength="93.93" lengthAdjust="spacingAndGlyphs" >FIC (ok %)</text><rect x="490.5" y="505.5" width="60.5" height="36.8" fill="#808080" /><rect x="490.5" y="505.5" width="60.5" height="36.8" fill="#008000" /><text x="506.14" y="531.9" font-size="17.88" fill="#f4f4f4" textLength="29.86" lengthAdjust="spacingAndGlyphs" >100</text><text x="310.50" y="579.6" font-size="22.24" fill="#fff" textLength="88.70" lengthAdjust="spacingAndGlyphs" >RS (ok %)</text><rect x="490.5" y="551.6" width="60.5" height="36.8" fill="#808080" /><text x="310.35" y="625.6" font-size="22.24" fill="#fff" textLength="113.57" lengthAdjust="spacingAndGlyphs" >Null Symbol</text><rect x="490.5" y="597.7" width="60.5" height="36.8" fill="#808080" /><rect x="490.5" y="597.7" width="60.5" height="36.8" fill="#008000" /><text x="311.18" y="671.6" font-size="22.24" fill="#fff" textLength="159.49" lengthAdjust="spacingAndGlyphs" >SymbolTime (ms)</text><rect x="490.5" y="643.8" width="60.5" height="36.8" fill="#808080" /><rect x="490.5" y="643.8" width="15.300000000000011" height="36.8" fill="#008000" /><text x="504.01" y="669.9" font-size="17.88" fill="#f4f4f4" textLength="34.22" lengthAdjust="spacingAndGlyphs" >0,39</text><text x="310.45" y="717.6" font-size="22.24" fill="#fff" textLength="149.01" lengthAdjust="spacingAndGlyphs" >FrameTime (ms)</text><rect x="490.5" y="689.9" width="60.5" height="36.8" fill="#808080" /><rect x="490.5" y="689.9" width="39.0" height="36.8" fill="#008000" /><text x="503.87" y="715.9" font-size="17.88" fill="#f4f4f4" textLength="34.42" lengthAdjust="spacingAndGlyphs" >95,7</text><clipPath id="p3"><rect x="572" y="392" width="375" height="491"/></clipPath><g clip-path="url(#p3)"><path d="M584.5,444 L584.5,407.5 Q584.5,403.5 588.5,403.5 L735,403.5 Q750,403.5 750,418.5 L750,444" fill="#808080" stroke="#8f9aa5" stroke-width="1.2"/><path d="M751,444 L751,407.5 Q751,403.5 755,403.5 L955,403.5 Q970,403.5 970,418.5 L970,444" fill="#808080" stroke="#8f9aa5" stroke-width="1.2"/><path d="M584.5,492.5 L584.5,456.8 Q584.5,452.8 588.5,452.8 L696.5,452.8 Q711.5,452.8 711.5,467.8 L711.5,492.5" fill="#808080" stroke="#8f9aa5" stroke-width="1.2"/><path d="M712.3,492.5 L712.3,456.8 Q712.3,452.8 716.3,452.8 L799,452.8 Q814,452.8 814,467.8 L814,492.5" fill="#1b5585" stroke="#5f87ab" stroke-width="1.2"/><path d="M814.8,492.5 L814.8,456.8 Q814.8,452.8 818.8,452.8 L975,452.8 Q990,452.8 990,467.8 L990,492.5" fill="#808080" stroke="#8f9aa5" stroke-width="1.2"/><rect x="713" y="490" width="100.3" height="4" fill="#1b5585" /><text x="644.25" y="434.8" font-size="25.73" fill="#e6e6e6" textLength="47.93" lengthAdjust="spacingAndGlyphs" >AAC</text><text x="809.35" y="434.8" font-size="25.73" fill="#e6e6e6" textLength="90.90" lengthAdjust="spacingAndGlyphs" >Options</text><text x="621.82" y="483.7" font-size="25.73" fill="#e6e6e6" textLength="52.70" lengthAdjust="spacingAndGlyphs" >Sync</text><text x="750.26" y="483.7" font-size="25.73" fill="#ffffff" textLength="27.84" lengthAdjust="spacingAndGlyphs" >TII</text><text x="854.35" y="483.7" font-size="25.73" fill="#e6e6e6" textLength="66.85" lengthAdjust="spacingAndGlyphs" >Audio</text><circle cx="631" cy="515" r="7" fill="#ff0000" /><rect x="667.8" y="508.2" width="13.2" height="13.3" fill="#0f2b4c" /><line x1="594.5" y1="537.4" x2="947" y2="537.4" stroke="#9fb6cc" stroke-width="1.3" /><text x="593.84" y="585.2" font-size="23.26" fill="#fff" textLength="73.13" lengthAdjust="spacingAndGlyphs" >Pattern</text><text x="694.35" y="585.2" font-size="23.26" fill="#fff" textLength="71.38" lengthAdjust="spacingAndGlyphs" >MainId</text><text x="793.99" y="585.2" font-size="23.26" fill="#fff" textLength="58.14" lengthAdjust="spacingAndGlyphs" >SubId</text><text x="880.97" y="585.2" font-size="23.26" fill="#fff" textLength="85.91" lengthAdjust="spacingAndGlyphs" >Strength</text><line x1="595" y1="591.3" x2="947" y2="591.3" stroke="#a9bed3" stroke-width="1.3" /><text x="596.90" y="630.0" font-size="21.22" fill="#fff" textLength="44.47" lengthAdjust="spacingAndGlyphs" >0x59</text><text x="697.75" y="630.0" font-size="21.22" fill="#fff" textLength="23.20" lengthAdjust="spacingAndGlyphs" >22</text><text x="797.97" y="630.0" font-size="21.22" fill="#fff" textLength="10.45" lengthAdjust="spacingAndGlyphs" >1</text><text x="884.22" y="630.0" font-size="21.22" fill="#fff" textLength="38.99" lengthAdjust="spacingAndGlyphs" >0.92</text><text x="596.90" y="666.9" font-size="21.22" fill="#fff" textLength="44.47" lengthAdjust="spacingAndGlyphs" >0x59</text><text x="697.75" y="666.9" font-size="21.22" fill="#fff" textLength="23.20" lengthAdjust="spacingAndGlyphs" >22</text><text x="797.00" y="666.9" font-size="21.22" fill="#fff" textLength="12.14" lengthAdjust="spacingAndGlyphs" >4</text><text x="884.22" y="666.9" font-size="21.22" fill="#fff" textLength="38.85" lengthAdjust="spacingAndGlyphs" >0.38</text><text x="596.90" y="704.6" font-size="21.22" fill="#fff" textLength="44.47" lengthAdjust="spacingAndGlyphs" >0x59</text><text x="697.75" y="704.6" font-size="21.22" fill="#fff" textLength="23.20" lengthAdjust="spacingAndGlyphs" >22</text><text x="796.29" y="704.6" font-size="21.22" fill="#fff" textLength="13.43" lengthAdjust="spacingAndGlyphs" >2</text><text x="884.22" y="704.6" font-size="21.22" fill="#fff" textLength="38.93" lengthAdjust="spacingAndGlyphs" >0.29</text></g><rect x="954" y="419.5" width="909" height="2.2" fill="#172c44" /><text x="1262.41" y="414.0" font-size="22.53" fill="#fff" textLength="319.91" lengthAdjust="spacingAndGlyphs" >Channel Impulse Response (CIR)</text><path d="M1838.5,399.5 L1856.5,399.5 L1847.5,415 Z" fill="none" stroke="#e8e8e8" stroke-width="1.3"/><line x1="1202.5" y1="423" x2="1202.5" y2="883" stroke="#262626" stroke-width="1.2" /><circle cx="979.5" cy="449.9" r="9.5" fill="#e0e0e0" /><text x="994.44" y="456.7" font-size="17.88" fill="#fff" textLength="51.60" lengthAdjust="spacingAndGlyphs" >Freeze</text><circle cx="1085.9" cy="449.9" r="9.5" fill="#e0e0e0" /><text x="1100.89" y="456.7" font-size="17.88" fill="#fff" textLength="69.04" lengthAdjust="spacingAndGlyphs" >Gradient</text><text x="976.58" y="518.6" font-size="18.31" fill="#fff" textLength="134.33" lengthAdjust="spacingAndGlyphs" >Smoothing Level</text><line x1="970.3" y1="546.8" x2="1186.8" y2="546.8" stroke="#e2e2e2" stroke-width="3" stroke-linecap="butt"/><line x1="979.5" y1="530.5" x2="979.5" y2="536.2" stroke="#b4b4b4" stroke-width="1.5" /><line x1="999.21" y1="530.5" x2="999.21" y2="536.2" stroke="#b4b4b4" stroke-width="1.5" /><line x1="1018.92" y1="530.5" x2="1018.92" y2="536.2" stroke="#b4b4b4" stroke-width="1.5" /><line x1="1038.6299999999999" y1="530.5" x2="1038.6299999999999" y2="536.2" stroke="#b4b4b4" stroke-width="1.5" /><line x1="1058.34" y1="530.5" x2="1058.34" y2="536.2" stroke="#b4b4b4" stroke-width="1.5" /><line x1="1078.05" y1="530.5" x2="1078.05" y2="536.2" stroke="#b4b4b4" stroke-width="1.5" /><line x1="1097.76" y1="530.5" x2="1097.76" y2="536.2" stroke="#b4b4b4" stroke-width="1.5" /><line x1="1117.47" y1="530.5" x2="1117.47" y2="536.2" stroke="#b4b4b4" stroke-width="1.5" /><line x1="1137.1799999999998" y1="530.5" x2="1137.1799999999998" y2="536.2" stroke="#b4b4b4" stroke-width="1.5" /><line x1="1156.8899999999999" y1="530.5" x2="1156.8899999999999" y2="536.2" stroke="#b4b4b4" stroke-width="1.5" /><line x1="1176.6" y1="530.5" x2="1176.6" y2="536.2" stroke="#b4b4b4" stroke-width="1.5" /><circle cx="999.2" cy="546.8" r="10" fill="url(#thumb)" stroke="#3a3a3a" stroke-width="1"/><text x="976.83" y="599.5" font-size="17.44" fill="#fff" textLength="62.95" lengthAdjust="spacingAndGlyphs" >Zoom X</text><line x1="970.3" y1="621.6" x2="1186.8" y2="621.6" stroke="#e2e2e2" stroke-width="3" stroke-linecap="butt"/><circle cx="1046.1" cy="621.6" r="10" fill="url(#thumb)" stroke="#3a3a3a" stroke-width="1"/><text x="976.85" y="674.2" font-size="17.44" fill="#fff" textLength="60.43" lengthAdjust="spacingAndGlyphs" >Zoom Y</text><line x1="980.5" y1="696.3" x2="1186.8" y2="696.3" stroke="#e2e2e2" stroke-width="3" stroke-linecap="butt"/><circle cx="980.5" cy="696.3" r="10" fill="url(#thumb)" stroke="#3a3a3a" stroke-width="1"/><text x="977.20" y="749.0" font-size="17.44" fill="#fff" textLength="48.85" lengthAdjust="spacingAndGlyphs" >x-Axis</text><circle cx="994.7" cy="772.7" r="8.3" fill="#f8f8f8" /><text x="1013.21" y="779.3" font-size="17.88" fill="#fff" textLength="67.92" lengthAdjust="spacingAndGlyphs" >Samples</text><circle cx="994.7" cy="802.7" r="8.3" fill="#f8f8f8" /><circle cx="994.7" cy="802.7" r="4.4" fill="#383838" /><text x="1012.55" y="809.3" font-size="17.88" fill="#fff" textLength="68.73" lengthAdjust="spacingAndGlyphs" >Distance</text><circle cx="994.7" cy="832.7" r="8.3" fill="#f8f8f8" /><text x="1013.59" y="839.3" font-size="17.88" fill="#fff" textLength="40.73" lengthAdjust="spacingAndGlyphs" >Time</text><rect x="1325" y="451" width="25" height="340" fill="#3d3d3d" /><line x1="1325" y1="519.5" x2="1848" y2="519.5" stroke="#8c8c8c" stroke-width="1" /><line x1="1325" y1="588.5" x2="1848" y2="588.5" stroke="#8c8c8c" stroke-width="1" /><line x1="1325" y1="656.5" x2="1848" y2="656.5" stroke="#8c8c8c" stroke-width="1" /><line x1="1325" y1="724.5" x2="1848" y2="724.5" stroke="#8c8c8c" stroke-width="1" /><line x1="1350.5" y1="451" x2="1350.5" y2="791" stroke="#8c8c8c" stroke-width="1" /><line x1="1381.5" y1="451" x2="1381.5" y2="791" stroke="#8c8c8c" stroke-width="1" /><line x1="1412.5" y1="451" x2="1412.5" y2="791" stroke="#8c8c8c" stroke-width="1" /><line x1="1443.5" y1="451" x2="1443.5" y2="791" stroke="#8c8c8c" stroke-width="1" /><line x1="1474.5" y1="451" x2="1474.5" y2="791" stroke="#8c8c8c" stroke-width="1" /><line x1="1506.5" y1="451" x2="1506.5" y2="791" stroke="#8c8c8c" stroke-width="1" /><line x1="1537.5" y1="451" x2="1537.5" y2="791" stroke="#8c8c8c" stroke-width="1" /><line x1="1568.5" y1="451" x2="1568.5" y2="791" stroke="#8c8c8c" stroke-width="1" /><line x1="1599.5" y1="451" x2="1599.5" y2="791" stroke="#8c8c8c" stroke-width="1" /><line x1="1630.5" y1="451" x2="1630.5" y2="791" stroke="#8c8c8c" stroke-width="1" /><line x1="1662.5" y1="451" x2="1662.5" y2="791" stroke="#8c8c8c" stroke-width="1" /><line x1="1693.5" y1="451" x2="1693.5" y2="791" stroke="#8c8c8c" stroke-width="1" /><line x1="1724.5" y1="451" x2="1724.5" y2="791" stroke="#8c8c8c" stroke-width="1" /><line x1="1755.5" y1="451" x2="1755.5" y2="791" stroke="#8c8c8c" stroke-width="1" /><line x1="1787.5" y1="451" x2="1787.5" y2="791" stroke="#8c8c8c" stroke-width="1" /><line x1="1818.5" y1="451" x2="1818.5" y2="791" stroke="#8c8c8c" stroke-width="1" /><rect x="1325" y="451" width="523" height="340" fill="none" stroke="#a8a8a8" stroke-width="2"/><line x1="1352.5" y1="452" x2="1352.5" y2="790" stroke="#f0f070" stroke-width="1" stroke-dasharray="1,2"/><polyline points="1326.8,645.8 1330.9,667.5 1336.3,629.5 1339.0,641.7 1341.2,641.7 1345.8,605.0 1348.0,599.6 1349.9,607.8 1354.0,553.4 1361.3,643.0 1367.6,592.8 1369.5,591.4 1375.7,641.7 1377.6,642.5 1380.3,632.2 1388.0,664.8 1391.2,659.4 1396.1,637.6 1400.2,644.4 1402.9,639.0 1405.6,644.4 1409.2,613.2 1411.9,613.2 1415.7,603.7 1418.4,637.6 1420.0,636.3 1423.3,614.5 1427.4,634.9 1431.4,614.5 1436.3,606.4 1440.1,583.3 1443.3,549.3 1445.4,558.8 1448.2,588.7 1452.4,488.2 1455.0,529.0 1457.7,575.1 1459.6,581.9 1461.7,580.6 1466.4,648.5 1470.4,590.1 1474.8,654.0 1480.2,610.5 1484.0,652.6 1487.6,621.3 1491.6,629.5 1497.9,576.5 1502.0,605.0 1504.7,579.2 1508.0,594.2 1512.0,630.9 1515.6,625.4 1518.8,651.2 1525.6,601.0 1527.5,602.3 1531.1,636.3 1535.1,651.2 1539.2,681.1 1541.9,667.5 1544.6,670.3 1548.2,652.6 1550.9,671.6 1554.7,651.2 1557.7,667.0 1560.1,663.5 1563.7,639.0 1567.8,673.0 1570.5,659.4 1573.5,673.0 1576.2,656.7 1578.7,656.7 1581.4,658.0 1585.0,651.2 1586.9,659.4 1589.0,652.6 1593.9,712.4 1598.5,666.2 1600.4,681.1 1603.2,660.8 1606.7,666.2 1611.3,697.5 1614.0,668.9 1616.8,667.5 1621.1,630.9 1623.8,641.7 1627.1,640.4 1630.3,655.3 1635.2,637.6 1639.3,620.0 1641.2,625.4 1643.9,617.3 1647.5,620.0 1650.2,583.3 1652.9,524.8 1657.5,577.9 1663.8,613.2 1666.5,624.1 1672.7,662.1 1678.2,651.2 1682.8,696.1 1691.8,629.5 1700.5,693.4 1702.6,677.1 1705.9,713.8 1709.9,651.4 1714.5,686.7 1717.2,682.7 1721.3,618.7 1723.5,633.7 1725.4,626.9 1728.1,584.7 1737.1,660.9 1739.0,662.3 1744.4,684.0 1748.0,671.8 1751.2,675.9 1755.3,692.2 1758.0,684.0 1762.1,678.6 1764.3,688.1 1768.9,669.1 1771.6,689.5 1775.2,680.0 1780.6,714.0 1788.0,693.5 1792.0,716.7 1796.9,678.6 1800.2,671.8 1806.2,705.8 1809.7,692.2 1818.7,644.6 1826.1,688.1 1830.7,711.2 1834.2,675.9 1839.7,692.2 1843.7,680.0 1847.8,694.9" fill="none" stroke="#ececec" stroke-width="1.1" stroke-linejoin="round"/><circle cx="1354.5" cy="549.3" r="5.8" fill="#1aa0dc" /><circle cx="1454.6" cy="530.5" r="5.8" fill="#f4f000" /><circle cx="1654.8" cy="538.6" r="5.8" fill="#e01818" /><circle cx="1730.7" cy="597.3" r="5.8" fill="#7a2fe0" /><rect x="1352.2" y="792.8" width="483.1" height="12.8" fill="#b0b0b0" /><rect x="1456" y="793.5" width="54.3" height="12" fill="#ff0000" stroke="#ff6a6a" stroke-width="0.8"/><rect x="1326.1" y="793.3" width="11.7" height="12.2" fill="#e81010" stroke="#ff7070" stroke-width="0.8"/><rect x="1339.4" y="793.3" width="11.7" height="12.2" fill="#e81010" stroke="#ff7070" stroke-width="0.8"/><circle cx="1332" cy="799.4" r="3" fill="none" stroke="#600" stroke-width="1"/><path d="M1342.5,799.4 L1347.5,796 L1347.5,802.8 Z" fill="#400"/><rect x="1835.3" y="793.3" width="11.9" height="12.2" fill="#e81010" stroke="#ff7070" stroke-width="0.8"/><path d="M1843.8,799.4 L1838.8,796 L1838.8,802.8 Z" fill="#400"/><text x="1314.3" y="458.5" font-size="21" fill="#fff" text-anchor="end">-10.0</text><text x="1314.3" y="527.0" font-size="21" fill="#fff" text-anchor="end">-20.0</text><text x="1314.3" y="596.0" font-size="21" fill="#fff" text-anchor="end">-30.0</text><text x="1314.3" y="664.0" font-size="21" fill="#fff" text-anchor="end">-40.0</text><text x="1314.3" y="732.0" font-size="21" fill="#fff" text-anchor="end">-50.0</text><text x="1314.3" y="798.5" font-size="21" fill="#fff" text-anchor="end">-60.0</text><text x="1350.5" y="827.0" font-size="15.6" fill="#fff" text-anchor="middle">-6</text><text x="1381.5" y="846.7" font-size="15.6" fill="#fff" text-anchor="middle">-4</text><text x="1412.5" y="827.0" font-size="15.6" fill="#fff" text-anchor="middle">-2</text><text x="1443.5" y="846.7" font-size="15.6" fill="#fff" text-anchor="middle">0</text><text x="1474.5" y="827.0" font-size="15.6" fill="#fff" text-anchor="middle">2</text><text x="1506.5" y="846.7" font-size="15.6" fill="#fff" text-anchor="middle">4</text><text x="1537.5" y="827.0" font-size="15.6" fill="#fff" text-anchor="middle">6</text><text x="1568.5" y="846.7" font-size="15.6" fill="#fff" text-anchor="middle">8</text><text x="1599.5" y="827.0" font-size="15.6" fill="#fff" text-anchor="middle">10</text><text x="1630.5" y="846.7" font-size="15.6" fill="#fff" text-anchor="middle">12</text><text x="1662.5" y="827.0" font-size="15.6" fill="#fff" text-anchor="middle">14</text><text x="1693.5" y="846.7" font-size="15.6" fill="#fff" text-anchor="middle">16</text><text x="1724.5" y="827.0" font-size="15.6" fill="#fff" text-anchor="middle">18</text><text x="1755.5" y="846.7" font-size="15.6" fill="#fff" text-anchor="middle">20</text><text x="1787.5" y="827.0" font-size="15.6" fill="#fff" text-anchor="middle">22</text><text x="1818.5" y="846.7" font-size="15.6" fill="#fff" text-anchor="middle">24</text><text x="1475.24" y="874.6" font-size="19.77" fill="#fff" textLength="222.21" lengthAdjust="spacingAndGlyphs" >Distance Difference (km)</text><g transform="translate(1248.1,689.5) rotate(-90)"><text x="-1.68" y="0.0" font-size="22.38" fill="#fff" textLength="139.74" lengthAdjust="spacingAndGlyphs" >Magnitude (dB)</text></g>__CONTENT__</svg></body></html>
